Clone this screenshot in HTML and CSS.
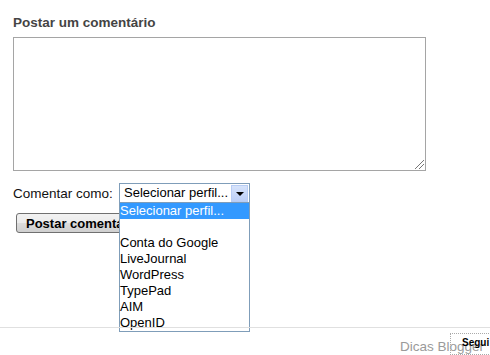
FILE: index.html
```html
<!DOCTYPE html>
<html lang="pt">
<head>
  <meta charset="UTF-8">
  <title>Postar um comentário</title>
  <link rel="stylesheet" href="styles.css">
</head>
<body>

  <!-- Comment form -->
  <div class="comment-form">
    <h4 class="form-title">Postar um comentário</h4>
    <div class="comment-box"><span class="grip"></span></div>

    <div class="profile-row">
      <span class="profile-label">Comentar como:</span>
      <div class="profile-select">
        <span class="select-value">Selecionar perfil...</span>
        <span class="select-arrow"></span>
      </div>
    </div>

    <button class="post-button">Postar comentário</button>
  </div>

  <!-- Open dropdown list -->
  <ul class="select-list">
    <li class="selected">Selecionar perfil...</li>
    <li>&nbsp;</li>
    <li>Conta do Google</li>
    <li>LiveJournal</li>
    <li>WordPress</li>
    <li>TypePad</li>
    <li>AIM</li>
    <li>OpenID</li>
  </ul>

  <div class="footer">
    <span class="blog-name">Dicas Blogger</span>
    <span class="follow-button">Segui</span>
  </div>

</body>
</html>
```

FILE: styles.css
```css
* {
  box-sizing: border-box;
}

body {
  margin: 0;
  height: 355px;
  overflow: hidden;
  background: #fff;
  font-family: "Liberation Sans", Arial, sans-serif;
  font-size: 13px;
  color: #000;
  display: flex;
  flex-direction: column;
  position: relative;
}

.comment-form {
  padding: 14px 13px 0;
}

.form-title {
  margin: 0 0 6px;
  font-size: 13.5px;
  line-height: 17px;
  font-weight: bold;
  color: #444;
}

.comment-box {
  width: 413px;
  height: 134px;
  border: 1px solid #a5a5a5;
  position: relative;
}

.grip {
  position: absolute;
  right: 1px;
  bottom: 1px;
  width: 9px;
  height: 9px;
  background: linear-gradient(135deg, transparent 45%, #777 45%, #777 52%, transparent 52%, transparent 70%, #777 70%, #777 77%, transparent 77%);
}

.profile-row {
  display: flex;
  align-items: center;
  margin-top: 12px;
  height: 20px;
}

.profile-label {
  width: 106px;
  font-size: 13.5px;
  color: #111;
}

.profile-select {
  width: 131px;
  height: 20px;
  border: 1px solid #7f9db9;
  display: flex;
  align-items: center;
  justify-content: space-between;
  padding: 1px;
}

.select-value {
  padding-left: 3px;
  line-height: 16px;
}

.select-arrow {
  width: 17px;
  height: 17px;
  border: 1px solid #b8cdf5;
  background: linear-gradient(#d6e3fb, #bccff7);
  position: relative;
}

.select-arrow::after {
  content: "";
  position: absolute;
  left: 4px;
  top: 6px;
  border-left: 4px solid transparent;
  border-right: 4px solid transparent;
  border-top: 4px solid #000;
}

.post-button {
  margin: 10px 0 0 3px;
  height: 20px;
  padding: 0 9px;
  font-family: "Liberation Sans", Arial, sans-serif;
  font-size: 13px;
  font-weight: bold;
  color: #000;
  border: 1px solid #707070;
  border-radius: 3px;
  background: linear-gradient(#f2f2f2 0%, #ebebeb 50%, #dddddd 50%, #cfcfcf 100%);
}

.select-list {
  position: absolute;
  left: 119px;
  top: 202px;
  width: 131px;
  margin: 0;
  padding: 0;
  list-style: none;
  border: 1px solid #7f9db9;
  background: #fff;
}

.select-list li {
  height: 16px;
  line-height: 16px;
  padding-left: 0;
  white-space: nowrap;
}

.select-list .selected {
  background: #3399ff;
  color: #fff;
}

.footer {
  margin-top: auto;
  height: 28px;
  border-top: 1px solid #e0e0e0;
  display: flex;
  justify-content: flex-end;
  align-items: center;
  padding-right: 6px;
  position: relative;
}

.blog-name {
  font-family: "Liberation Sans", Arial, sans-serif;
  font-size: 13.5px;
  color: #9a9a9a;
  margin-top: 10px;
}

.follow-button {
  position: absolute;
  left: 450px;
  top: 5px;
  width: 45px;
  height: 22px;
  border: 1px dotted #aaa;
  padding: 3px 0 0 11px;
  font-size: 10px;
  font-weight: bold;
  color: #000;
}
```
